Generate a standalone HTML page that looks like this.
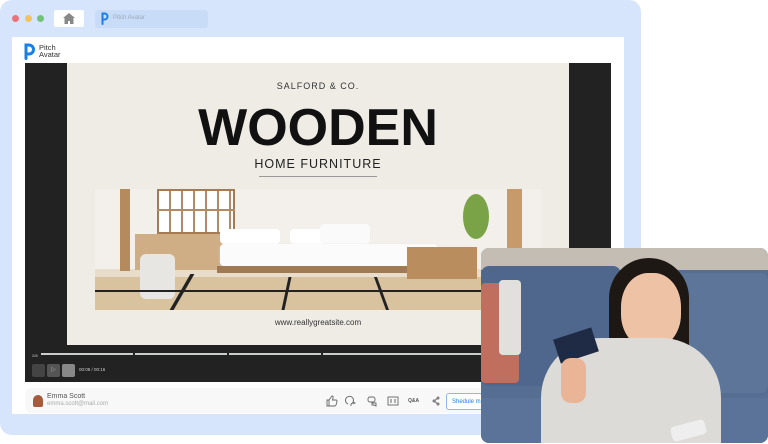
<!DOCTYPE html>
<html><head><meta charset="utf-8"><style>
*{margin:0;padding:0;box-sizing:border-box}
body{width:768px;height:444px;background:#fff;position:relative;overflow:hidden;font-family:"Liberation Sans",sans-serif}
.a{position:absolute}
</style></head><body>
<div class="a" style="left:0;top:0;width:641px;height:435px;background:#d6e5fb;border-radius:12px"></div>
<div class="a" style="left:12px;top:15px;width:7px;height:7px;border-radius:50%;background:#e9737b"></div>
<div class="a" style="left:25px;top:15px;width:7px;height:7px;border-radius:50%;background:#f2c25e"></div>
<div class="a" style="left:37px;top:15px;width:7px;height:7px;border-radius:50%;background:#72c37a"></div>
<div class="a" style="left:54px;top:10px;width:30px;height:17px;background:#fff;border-radius:2px"></div>
<svg class="a" style="left:63px;top:13px" width="12" height="11" viewBox="0 0 12 11"><path d="M6 0L0 5h1.5v6h3.5v-3h2v3h3.5V5H12z" fill="#888"/></svg>
<div class="a" style="left:95px;top:10px;width:113px;height:18px;background:#c9dcf7;border-radius:3px"></div>
<svg class="a" style="left:101px;top:12px" width="8" height="13" viewBox="0 0 8 13"><path d="M1.5 12V1.5h2a3 3 0 0 1 0 6H1.5" fill="none" stroke="#1a7fe8" stroke-width="2" stroke-linecap="round"/></svg>
<div class="a" style="left:113px;top:15px;font-size:6px;color:#9ab">Pitch Avatar</div>
<div class="a" style="left:12px;top:37px;width:612px;height:377px;background:#fff"></div>
<svg class="a" style="left:24px;top:43px" width="11" height="17" viewBox="0 0 11 17"><path d="M2 15.5V2h3a4.5 4.5 0 0 1 0 9H2" fill="none" stroke="#1a7fe8" stroke-width="3" stroke-linecap="round"/></svg>
<div class="a" style="left:39px;top:44px;font-size:7.5px;line-height:7px;color:#333">Pitch<br>Avatar</div>
<div class="a" style="left:25px;top:63px;width:586px;height:319px;background:#222"></div>
<div class="a" style="left:67px;top:63px;width:502px;height:282px;background:#efece6"></div>
<div class="a" style="left:67px;top:81px;width:502px;text-align:center;font-size:9px;letter-spacing:1px;color:#333">SALFORD &amp; CO.</div>
<div class="a" style="left:67px;top:98px;width:502px;text-align:center;font-size:52px;font-weight:bold;color:#111;line-height:60px">WOODEN</div>
<div class="a" style="left:67px;top:157px;width:502px;text-align:center;font-size:12.5px;letter-spacing:1px;color:#222">HOME FURNITURE</div>
<div class="a" style="left:259px;top:176px;width:118px;height:1px;background:#999"></div>
<div class="a" style="left:95px;top:189px;width:446px;height:121px;background:#f3efea;overflow:hidden">
 <div class="a" style="left:0;top:86px;width:446px;height:35px;background:#d8c39e"></div>
 <div class="a" style="left:0;top:80px;width:446px;height:8px;background:#e8dccb"></div>
 <div class="a" style="left:25px;top:0;width:10px;height:82px;background:#b48a5f"></div>
 <div class="a" style="left:412px;top:0;width:15px;height:68px;background:#c69a6a"></div>
 <div class="a" style="left:62px;top:0;width:78px;height:45px;background:repeating-linear-gradient(90deg,#fff 0 10px,#b58a60 10px 12px);border:2px solid #a77b52"></div>
 <div class="a" style="left:62px;top:20px;width:78px;height:2px;background:#b58a60"></div>
 <div class="a" style="left:40px;top:45px;width:95px;height:36px;background:#cfae86"></div>
 <div class="a" style="left:125px;top:40px;width:60px;height:15px;background:#fff;border-radius:4px"></div>
 <div class="a" style="left:195px;top:40px;width:60px;height:15px;background:#fff;border-radius:4px"></div>
 <div class="a" style="left:225px;top:35px;width:50px;height:20px;background:#fafafa;border-radius:4px"></div>
 <div class="a" style="left:125px;top:55px;width:218px;height:22px;background:#fbfbfb;border-radius:4px;box-shadow:0 1px 2px #ccc"></div>
 <div class="a" style="left:122px;top:77px;width:222px;height:7px;background:#9f7a52"></div>
 <div class="a" style="left:312px;top:58px;width:70px;height:32px;background:#b98d5e"></div>
 <div class="a" style="left:368px;top:5px;width:26px;height:45px;border-radius:50%;background:#7aa246"></div>
 <div class="a" style="left:45px;top:65px;width:35px;height:45px;background:#e8e6e2;border-radius:6px"></div>
 <div class="a" style="left:85px;top:85px;width:4px;height:36px;background:#222;transform:skewX(-30deg)"></div>
 <div class="a" style="left:190px;top:88px;width:3px;height:33px;background:#222;transform:skewX(-12deg)"></div>
 <div class="a" style="left:285px;top:88px;width:3px;height:33px;background:#222;transform:skewX(20deg)"></div>
 <div class="a" style="left:0;top:101px;width:446px;height:2px;background:#222"></div>
</div>
<div class="a" style="left:67px;top:318px;width:502px;text-align:center;font-size:8px;color:#333">www.reallygreatsite.com</div>
<div class="a" style="left:32px;top:353px;font-size:4px;color:#ccc">2/8</div>
<div class="a" style="left:41px;top:353px;width:440px;height:2px;background:linear-gradient(90deg,#ccc 92px,#222 92px,#222 94px,#ccc 94px,#ccc 186px,#222 186px,#222 188px,#ccc 188px,#ccc 280px,#222 280px,#222 282px,#ccc 282px)"></div>
<div class="a" style="left:32px;top:364px;width:13px;height:13px;background:#444;border-radius:2px"></div>
<div class="a" style="left:47px;top:364px;width:13px;height:13px;background:#555;border-radius:2px;color:#aaa;font-size:6px;text-align:center;line-height:13px">▷</div>
<div class="a" style="left:62px;top:364px;width:13px;height:13px;background:#888;border-radius:2px"></div>
<div class="a" style="left:79px;top:367px;font-size:4.5px;color:#ccc">00:08 / 00:16</div>
<div class="a" style="left:25px;top:388px;width:586px;height:25px;background:#f8f8f8;border-radius:6px"></div>
<div class="a" style="left:33px;top:395px;width:10px;height:12px;border-radius:5px 5px 2px 2px;background:#a85a3c"></div>
<div class="a" style="left:47px;top:393px;font-size:7px;color:#555">Emma Scott</div>
<div class="a" style="left:47px;top:401px;font-size:6px;color:#aaa">emma.scott@mail.com</div>
<svg class="a" style="left:326px;top:395px" width="115" height="12" viewBox="0 0 115 12" fill="none" stroke="#666" stroke-width="0.9">
<path d="M1 5h2v6H1zM3 5l3-4c1 0 1.5 1 1 2L6.5 5H10c.8 0 1.2.8 1 1.5L10 10c-.2.6-.6 1-1.3 1H3"/>
<path d="M22 9a4 4 0 1 1 3 0v2M27 7l2 1-2 1"/>
<rect x="42" y="2" width="7" height="5" rx="2"/><path d="M46 8h4v3l-2-1h-2z"/>
<rect x="62" y="2" width="10" height="8"/><path d="M64 5h2M64 7h2M68 5h2M68 7h2"/>
<circle cx="108" cy="6" r="1"/><circle cx="112" cy="3" r="1"/><circle cx="112" cy="9" r="1"/><path d="M109 5.5l2-2M109 6.5l2 2"/>
</svg>
<div class="a" style="left:408px;top:398px;font-size:5px;font-weight:bold;color:#555">Q&amp;A</div>
<div class="a" style="left:446px;top:393px;width:50px;height:17px;border:1px solid #8bb8f0;border-radius:3px;background:#fff;font-size:6px;color:#1a7fe8;padding:5px 0 0 5px;white-space:nowrap;overflow:hidden">Shedule m</div>
<div class="a" style="left:481px;top:248px;width:287px;height:195px;border-radius:8px;overflow:hidden;background:#576e93">
 <div class="a" style="left:0;top:0;width:287px;height:22px;background:#c4bdb4"></div>
 <div class="a" style="left:0;top:18px;width:140px;height:120px;background:#4f678c;border-radius:8px"></div>
 <div class="a" style="left:160px;top:25px;width:127px;height:120px;background:#5d7599;border-radius:8px"></div>
 <div class="a" style="left:0;top:35px;width:38px;height:100px;background:#c06f5e;border-radius:4px"></div>
 <div class="a" style="left:18px;top:32px;width:22px;height:75px;background:#e2e0dc;border-radius:4px"></div>
 <div class="a" style="left:0;top:150px;width:287px;height:45px;background:#5b7398"></div>
 <div class="a" style="left:128px;top:10px;width:80px;height:105px;background:#1e1815;border-radius:40px 40px 10px 10px"></div>
 <div class="a" style="left:140px;top:25px;width:60px;height:75px;background:#eec2a5;border-radius:45%"></div>
 <div class="a" style="left:60px;top:90px;width:180px;height:120px;background:#dcdbd7;border-radius:60px 60px 0 0"></div>
 <div class="a" style="left:75px;top:85px;width:40px;height:25px;background:#1f2a44;transform:rotate(-18deg)"></div>
 <div class="a" style="left:80px;top:110px;width:25px;height:45px;background:#eab597;border-radius:10px"></div>
 <div class="a" style="left:190px;top:175px;width:35px;height:15px;background:#eee;border-radius:4px;transform:rotate(-15deg)"></div>
</div>
</body></html>
